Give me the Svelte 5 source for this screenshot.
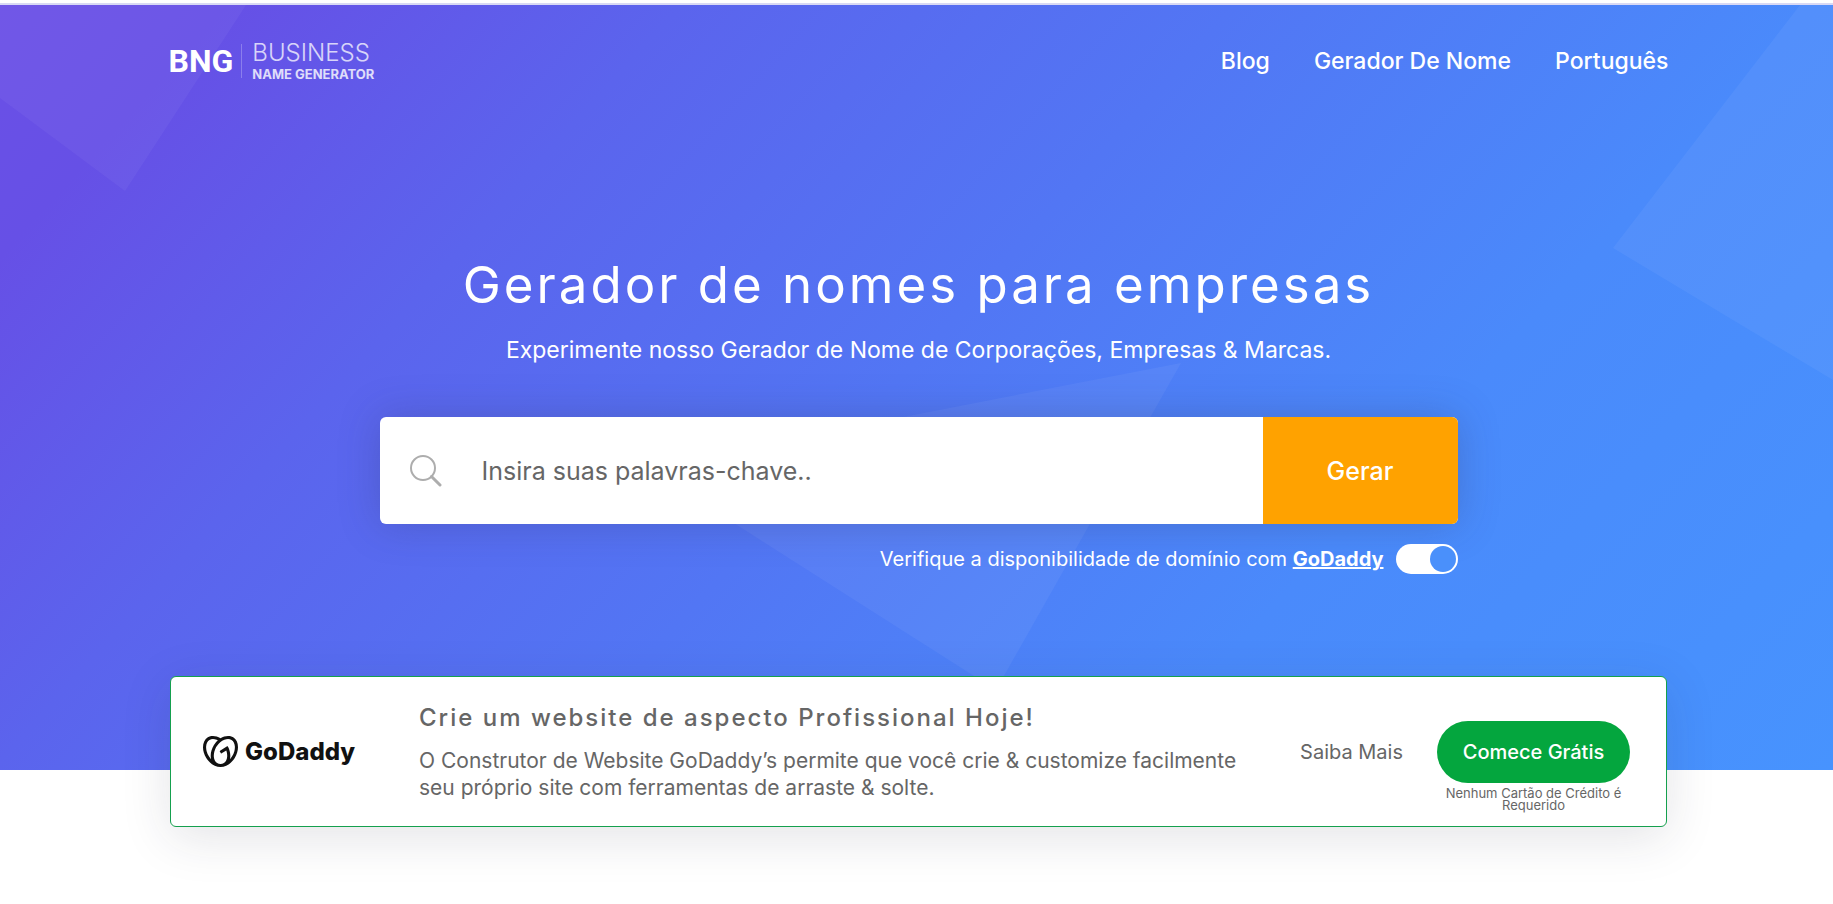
<script>
  let checkDomains = $state(true);
  let keywords = $state('');
</script>

<div class="page">
  <section class="hero">
    <svg class="shapes" viewBox="0 0 1833 765" preserveAspectRatio="none" aria-hidden="true">
      <polygon points="0,0 246,0 125,186 0,93" fill="#fff" fill-opacity=".045" />
      <polygon points="1800,0 1833,0 1833,375 1613,243" fill="#fff" fill-opacity=".05" />
      <polygon points="1181,358 646,462 996,685" fill="#fff" fill-opacity=".05" />
    </svg>

    <header class="container bar">
      <a class="brand" href="#home">
        <span class="mark">BNG</span>
        <span class="words">
          <span class="top">BUSINESS</span>
          <span class="bottom">NAME GENERATOR</span>
        </span>
      </a>
      <nav>
        <a href="#blog">Blog</a>
        <a href="#gerador">Gerador De Nome</a>
        <a href="#idioma">Português</a>
      </nav>
    </header>

    <main>
      <h1>Gerador de nomes para empresas</h1>
      <p class="lead">Experimente nosso Gerador de Nome de Corporações, Empresas &amp; Marcas.</p>
      <form class="search" onsubmit={(e) => e.preventDefault()}>
        <label for="keywords" aria-label="Palavras-chave">
          <svg width="32" height="32" viewBox="0 0 32 32" fill="none" stroke="#adadad" stroke-width="2" aria-hidden="true">
            <circle cx="13" cy="13" r="12" />
            <path d="M21.500 21.500 30 30" stroke-width="3" stroke-linecap="round" />
          </svg>
        </label>
        <input id="keywords" type="text" placeholder="Insira suas palavras-chave.." bind:value={keywords} />
        <button type="submit">Gerar</button>
      </form>
      <div class="check">
        <label for="domains">Verifique a disponibilidade de domínio com <a href="#godaddy">GoDaddy</a></label>
        <input id="domains" type="checkbox" bind:checked={checkDomains} />
      </div>
    </main>
  </section>

  <div class="offer">
    <aside class="container card">
      <div class="partner">
        <svg width="35" height="33" viewBox="0 1 24 22" fill="#111" aria-hidden="true">
          <path d="M20.702 2.29c-2.494-1.554-5.778-1.187-8.706.654C9.076 1.104 5.79.736 3.3 2.29c-3.941 2.463-4.42 8.806-1.07 14.167 2.47 3.954 6.333 6.269 9.77 6.226 3.439.043 7.301-2.273 9.771-6.226 3.347-5.361 2.872-11.704-1.069-14.167zM4.042 15.328a12.838 12.838 0 01-1.546-3.541 10.12 10.12 0 01-.336-3.338c.15-1.98.956-3.524 2.27-4.345 1.315-.822 3.052-.87 4.903-.137.281.113.556.24.825.382A15.11 15.11 0 007.5 7.54c-2.035 3.255-2.655 6.878-1.945 9.765a13.247 13.247 0 01-1.514-1.98zm17.465-3.541a12.866 12.866 0 01-1.547 3.54 13.25 13.25 0 01-1.513 1.984c.635-2.589.203-5.76-1.353-8.734a.39.39 0 00-.563-.153l-4.852 3.032a.397.397 0 00-.126.546l.712 1.139a.395.395 0 00.547.126l3.145-1.965c.101.306.203.606.28.916.296 1.086.41 2.214.335 3.337-.15 1.982-.956 3.525-2.27 4.347a4.437 4.437 0 01-2.25.65h-.101a4.432 4.432 0 01-2.25-.65c-1.314-.822-2.121-2.365-2.27-4.347-.074-1.123.039-2.252.336-3.337a13.05 13.05 0 014.05-6.482 10.148 10.148 0 012.849-1.765c1.845-.733 3.586-.685 4.9.137 1.316.822 2.122 2.365 2.271 4.345a10.146 10.146 0 01-.33 3.334z" />
        </svg>
        <span>GoDaddy</span>
      </div>
      <div class="pitch">
        <h2>Crie um website de aspecto Profissional Hoje!</h2>
        <p>O Construtor de Website GoDaddy’s permite que você crie &amp; customize facilmente seu próprio site com ferramentas de arraste &amp; solte.</p>
      </div>
      <a class="more" href="#saiba-mais">Saiba Mais</a>
      <div class="cta">
        <a href="#comece">Comece Grátis</a>
        <small>Nenhum Cartão de Crédito é Requerido</small>
      </div>
    </aside>
  </div>
</div>

<style>
  :global(body) {
    margin: 0;
    background: #fff;
  }

  .page {
    font-family: Inter, "Noto Sans", sans-serif;
    color: #666;
    border-top: 3px solid #fff;
    padding-bottom: 76px;
    overflow: hidden;
  }

  .page *,
  .page {
    box-sizing: border-box;
  }

  a {
    color: inherit;
    text-decoration: none;
  }

  .container {
    width: calc(100% - 48px);
    max-width: 1497px;
    margin-inline: auto;
  }

  .hero {
    position: relative;
    border-top: 2px solid #d9d9f4;
    padding-left: 4px;
    padding-bottom: 196px;
    color: #fff;
    background: linear-gradient(132deg, #6b50e6 0%, #6650e6 9%, #5b64ed 27%, #5276f4 49%, #4a8afb 72%, #4793fe 100%);
  }

  .shapes {
    position: absolute;
    inset: 0;
    width: 100%;
    height: 100%;
  }

  .bar,
  main {
    position: relative;
  }

  .container.bar {
    display: flex;
    align-items: center;
    justify-content: space-between;
    max-width: 1500px;
    padding-top: 36px;
  }

  .brand {
    display: flex;
    align-items: center;
    height: 40px;
  }

  .mark {
    font-family: Roboto, sans-serif;
    font-weight: 700;
    font-size: 32px;
    padding-right: 8px;
    border-right: 1px solid rgba(255, 255, 255, 0.25);
    line-height: 34px;
  }

  .words {
    display: flex;
    flex-direction: column;
    padding-left: 10px;
  }

  .top {
    font-weight: 300;
    font-size: 24px;
    line-height: 26px;
    opacity: 0.75;
  }

  .bottom {
    font-weight: 700;
    font-size: 13px;
    line-height: 16px;
    opacity: 0.8;
  }

  nav {
    display: flex;
    gap: 44px;
    font-size: 23px;
    font-weight: 500;
    line-height: 32px;
  }

  main {
    width: calc(100% - 48px);
    max-width: 1078px;
    margin: 172px auto 0;
    text-align: center;
  }

  h1 {
    margin: 0;
    font-weight: 400;
    font-size: 51px;
    line-height: 64px;
    letter-spacing: 3px;
  }

  .lead {
    margin: 17px 0 0;
    font-size: 23px;
    line-height: 32px;
  }

  .search {
    display: flex;
    align-items: stretch;
    min-height: 107px;
    margin-top: 51px;
    border-radius: 6px;
    overflow: hidden;
    background: #fff;
    box-shadow: 0 0 40px rgba(50, 50, 93, 0.26);
  }

  .search label {
    display: flex;
    align-items: center;
    padding-left: 30px;
  }

  .search input {
    flex: 1;
    min-width: 0;
    padding: 0 20px 0 40px;
    border: 0;
    outline: 0;
    background: none;
    font: inherit;
    font-size: 25px;
    color: #666;
  }

  .search input::placeholder {
    color: #666;
    opacity: 1;
  }

  .search button {
    width: 195px;
    border: 0;
    background: #ffa200;
    color: #fff;
    font: inherit;
    font-size: 25px;
    font-weight: 500;
  }

  .check {
    display: flex;
    align-items: center;
    justify-content: flex-end;
    gap: 12px;
    margin-top: 20px;
    font-size: 20px;
    line-height: 30px;
  }

  .check a {
    font-weight: 700;
    text-decoration: underline;
  }

  .check input {
    appearance: none;
    display: flex;
    width: 62px;
    height: 30px;
    margin: 0;
    padding: 2px;
    border-radius: 15px;
    background: #fff;
  }

  .check input::before {
    content: "";
    width: 26px;
    height: 26px;
    border-radius: 50%;
    background: #4a90fb;
  }

  .check input:checked::before {
    margin-left: auto;
  }

  .offer {
    position: relative;
    margin-top: -94px;
    padding-left: 4px;
  }

  .card {
    display: flex;
    align-items: center;
    min-height: 151px;
    padding: 0 36px 0 32px;
    border: 1px solid #15a04e;
    border-radius: 6px;
    background: #fff;
    box-shadow: 0 10px 50px rgba(40, 40, 60, 0.13);
  }

  .partner {
    display: flex;
    align-items: center;
    gap: 7px;
    flex: 0 0 216px;
    color: #111;
    font-size: 24px;
    font-weight: 800;
  }

  .pitch {
    flex: 1;
    max-width: 830px;
  }

  h2 {
    margin: 0 0 13px;
    font-size: 24px;
    font-weight: 500;
    line-height: 32px;
    letter-spacing: 2px;
  }

  .pitch p {
    margin: 0;
    font-size: 21px;
    line-height: 27px;
  }

  .more {
    margin-left: auto;
    font-size: 20px;
    white-space: nowrap;
  }

  .cta {
    flex: 0 0 193px;
    margin-left: 34px;
    padding-top: 28px;
    text-align: center;
  }

  .cta a {
    display: block;
    border-radius: 31px;
    background: #04a63e;
    color: #fff;
    font-size: 20px;
    font-weight: 500;
    line-height: 62px;
  }

  .cta small {
    display: block;
    margin-top: 4px;
    font-size: 13px;
    line-height: 12px;
  }
</style>
